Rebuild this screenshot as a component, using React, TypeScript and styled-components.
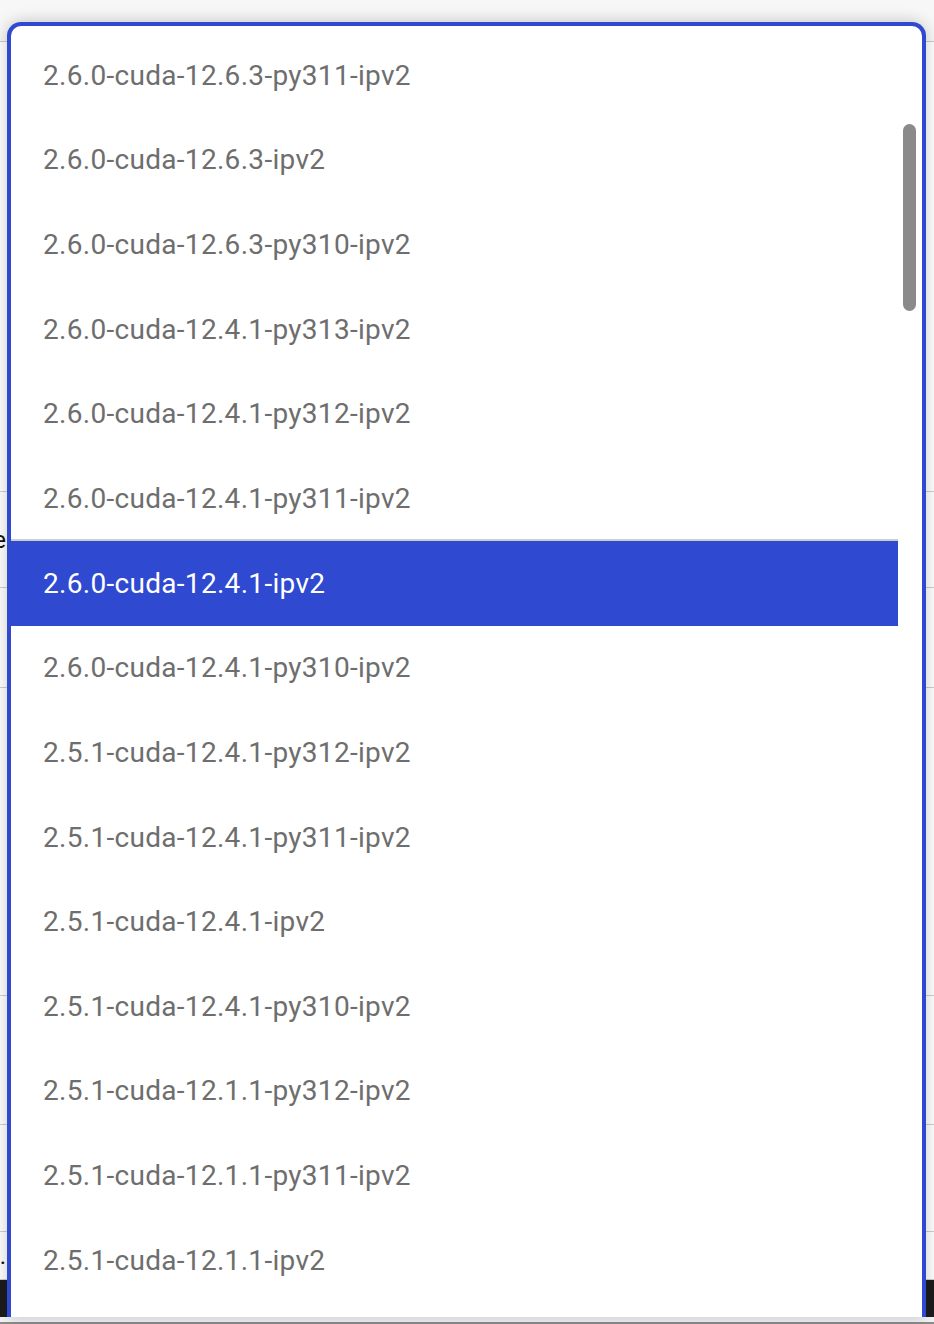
import React from 'react'
import styled, { createGlobalStyle } from 'styled-components'

const versions = [
  '2.6.0-cuda-12.6.3-py311-ipv2',
  '2.6.0-cuda-12.6.3-ipv2',
  '2.6.0-cuda-12.6.3-py310-ipv2',
  '2.6.0-cuda-12.4.1-py313-ipv2',
  '2.6.0-cuda-12.4.1-py312-ipv2',
  '2.6.0-cuda-12.4.1-py311-ipv2',
  '2.6.0-cuda-12.4.1-ipv2',
  '2.6.0-cuda-12.4.1-py310-ipv2',
  '2.5.1-cuda-12.4.1-py312-ipv2',
  '2.5.1-cuda-12.4.1-py311-ipv2',
  '2.5.1-cuda-12.4.1-ipv2',
  '2.5.1-cuda-12.4.1-py310-ipv2',
  '2.5.1-cuda-12.1.1-py312-ipv2',
  '2.5.1-cuda-12.1.1-py311-ipv2',
  '2.5.1-cuda-12.1.1-ipv2',
  '2.5.1-cuda-12.1.1-py310-ipv2',
]

const selected = '2.6.0-cuda-12.4.1-ipv2'

// rows of the form behind the open menu (only their left edge shows)
const backRows = [
  { h: 450, label: '' },
  { h: 96, label: 'Image' },
  { h: 100, label: '' },
  { h: 308, label: '' },
  { h: 129, label: '' },
  { h: 107, label: '' },
  { h: 48, label: '.' },
]

const GlobalStyle = createGlobalStyle`
  html, body {
    margin: 0;
    padding: 0;
    background: #fff;
    overflow: hidden;
  }
  body {
    font-family: Roboto, 'Liberation Sans', sans-serif;
  }
`

export default function App() {
  return (
    <>
      <GlobalStyle />
      <Page>
        <TopBar />
        {backRows.map((r, i) => (
          <BackRow key={i} $h={r.h}>
            <LabelCell>{r.label}</LabelCell>
          </BackRow>
        ))}
        <Footer />
        <Strip />
        <BottomLine />

        <Menu>
          <List>
            {versions.map((v) => (
              <Item key={v} $active={v === selected}>
                {v}
              </Item>
            ))}
          </List>
          <ScrollTrack>
            <Thumb />
          </ScrollTrack>
        </Menu>
      </Page>
    </>
  )
}

const Page = styled.div`
  position: relative;
  width: 934px;
  height: 1324px;
  overflow: hidden;
  display: flex;
  flex-direction: column;
  background: #fff;
`
const TopBar = styled.div`
  height: 42px;
  flex-shrink: 0;
  box-sizing: border-box;
  background: #f7f7f7;
  border-bottom: 1px solid #c9c9c9;
`
const BackRow = styled.div<{ $h: number }>`
  height: ${(p) => p.$h}px;
  flex-shrink: 0;
  box-sizing: border-box;
  border-bottom: 1px solid #cfcfcf;
  display: flex;
  align-items: center;
`
const LabelCell = styled.div`
  width: 6px;
  display: flex;
  justify-content: flex-end;
  white-space: nowrap;
  font-size: 24px;
  color: #111;
`
const Footer = styled.div`
  height: 37px;
  flex-shrink: 0;
  background: #1c1c1e;
`
const Strip = styled.div`
  height: 5px;
  flex-shrink: 0;
  background: #f3f4f8;
`
const BottomLine = styled.div`
  height: 2px;
  flex-shrink: 0;
  background: #8c8c8c;
`
const Menu = styled.div`
  position: absolute;
  top: 22px;
  left: 7px;
  width: 919px;
  height: 1295px;
  box-sizing: border-box;
  border: 4px solid #2f49d1;
  border-bottom: none;
  border-radius: 14px 14px 0 0;
  background: #fff;
  box-shadow: 0 0 16px rgba(0, 0, 0, 0.22);
  display: flex;
  overflow: hidden;
`
const List = styled.div`
  flex: 1;
  padding-top: 7px;
  display: flex;
  flex-direction: column;
`
const Item = styled.div<{ $active?: boolean }>`
  height: ${(p) => (p.$active ? '87px' : '84.6px')};
  margin-top: ${(p) => (p.$active ? '-2px' : '0')};
  flex-shrink: 0;
  box-sizing: border-box;
  display: flex;
  align-items: center;
  padding-left: 32px;
  font-size: 28px;
  letter-spacing: 0.3px;
  white-space: nowrap;
  color: ${(p) => (p.$active ? '#fff' : '#6e6e6e')};
  background: ${(p) => (p.$active ? '#2f49d1' : 'transparent')};
  border-top: ${(p) => (p.$active ? '2px solid #cdcdcd' : 'none')};
`
const ScrollTrack = styled.div`
  width: 24px;
  flex-shrink: 0;
  display: flex;
  flex-direction: column;
`
const Thumb = styled.div`
  margin: 98px 6px 0 5px;
  height: 187px;
  border-radius: 7px;
  background: #8a8a8a;
`
